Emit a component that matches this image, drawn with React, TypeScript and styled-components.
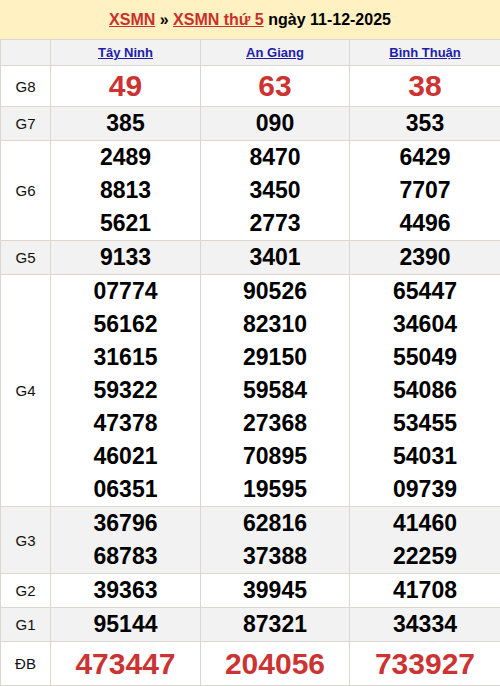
import styled, { createGlobalStyle } from "styled-components"

const GlobalStyle = createGlobalStyle`
    body {
        margin: 0;
        font-family: "Liberation Sans", Arial, sans-serif;
        background: #fff;
    }
`

const Tieude = styled.div`
    height: 39px;
    background-color: #fff1c1;
    display: flex;
    justify-content: center;
    align-items: center;
    font-size: 16px;
    font-weight: 700;
    color: #000;

    a {
        color: #c9302c;
        text-decoration: underline;
    }
`

const Bang = styled.table`
    width: 500px;
    border-collapse: collapse;
    table-layout: fixed;
`

const Dong = styled.tr<{ $xam?: boolean }>`
    background-color: ${p => (p.$xam ? "#f2f2f2" : "#fff")};
`

const OTen = styled.td`
    border: 1px solid #ddd6cf;
    text-align: center;
    font-size: 15px;
    color: #111;
    padding: 0;
`

const OTinh = styled.th`
    border: 1px solid #ddd6cf;
    height: 25px;
    padding: 0;
    font-size: 13px;
    font-weight: 700;

    a {
        color: #1d1daa;
        text-decoration: underline;
    }
`

const OSo = styled.td<{ $lon?: boolean; $cao?: number }>`
    border: 1px solid #ddd6cf;
    text-align: center;
    padding: 0;
    font-weight: 700;
    color: ${p => (p.$lon ? "#cc3333" : "#000")};
    font-size: ${p => (p.$lon ? "30px" : "23px")};

    div {
        line-height: ${p => p.$cao ?? 33}px;
        height: ${p => p.$cao ?? 33}px;
    }
`

const tinh = ["Tây Ninh", "An Giang", "Bình Thuận"]

const giai: { ten: string; so: string[][]; lon?: boolean; cao?: number }[] = [
    { ten: "G8", so: [["49"], ["63"], ["38"]], lon: true, cao: 40 },
    { ten: "G7", so: [["385"], ["090"], ["353"]] },
    { ten: "G6", so: [["2489", "8813", "5621"], ["8470", "3450", "2773"], ["6429", "7707", "4496"]] },
    { ten: "G5", so: [["9133"], ["3401"], ["2390"]] },
    {
        ten: "G4",
        so: [
            ["07774", "56162", "31615", "59322", "47378", "46021", "06351"],
            ["90526", "82310", "29150", "59584", "27368", "70895", "19595"],
            ["65447", "34604", "55049", "54086", "53455", "54031", "09739"],
        ],
    },
    { ten: "G3", so: [["36796", "68783"], ["62816", "37388"], ["41460", "22259"]] },
    { ten: "G2", so: [["39363"], ["39945"], ["41708"]] },
    { ten: "G1", so: [["95144"], ["87321"], ["34334"]] },
    { ten: "ĐB", so: [["473447"], ["204056"], ["733927"]], lon: true, cao: 43 },
]

const App = () => {
    return (
        <>
            <GlobalStyle />
            <Tieude>
                <span>
                    <a>XSMN</a> » <a>XSMN thứ 5</a> ngày 11-12-2025
                </span>
            </Tieude>
            <Bang>
                <colgroup>
                    <col style={{ width: 50 }} />
                    <col style={{ width: 150 }} />
                    <col style={{ width: 149 }} />
                    <col style={{ width: 151 }} />
                </colgroup>
                <thead>
                    <Dong $xam>
                        <OTinh></OTinh>
                        {tinh.map(t => (
                            <OTinh key={t}><a>{t}</a></OTinh>
                        ))}
                    </Dong>
                </thead>
                <tbody>
                    {giai.map((g, i) => (
                        <Dong key={g.ten} $xam={i % 2 === 1}>
                            <OTen>{g.ten}</OTen>
                            {g.so.map((cot, j) => (
                                <OSo key={j} $lon={g.lon} $cao={g.cao}>
                                    {cot.map(s => <div key={s}>{s}</div>)}
                                </OSo>
                            ))}
                        </Dong>
                    ))}
                </tbody>
            </Bang>
        </>
    )
}

export default App
